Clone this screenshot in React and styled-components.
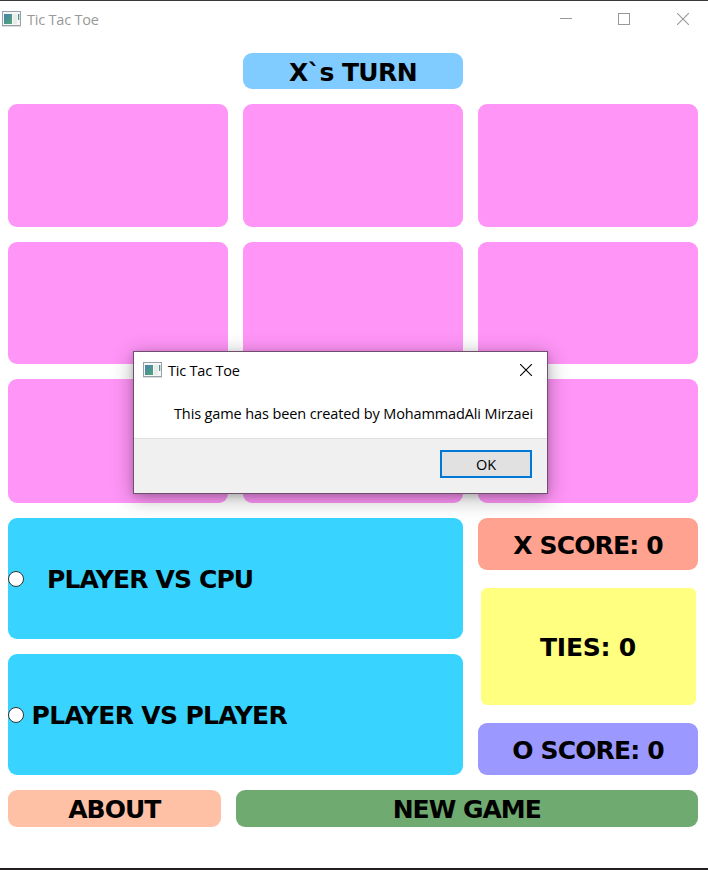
import React from 'react';
import styled, { createGlobalStyle } from 'styled-components';

const GlobalStyle = createGlobalStyle`
  *, *::before, *::after { box-sizing: border-box; }
  body { margin: 0; background: #fff; overflow: hidden; }
`;

const uiFont = '"Open Sans", "Noto Sans", sans-serif';
const gameFont = '"DejaVu Sans", sans-serif';

const Window = styled.div`
  position: relative;
  display: flex;
  flex-direction: column;
  width: 708px;
  height: 870px;
  background: #fff;
  border-top: 1px solid #3a3839;
  border-bottom: 2px solid #231f20;
  font-family: ${uiFont};
`;

const TitleBar = styled.header`
  display: flex;
  align-items: center;
  height: 36px;
  padding-left: 2px;
  padding-right: 19px;
`;

const AppIcon = styled.svg`
  display: block;
  flex: none;
  margin-right: 6px;
`;

const Title = styled.span`
  flex: 1;
  padding-top: 2px;
  font-size: 14.5px;
  letter-spacing: -0.2px;
  line-height: 20px;
  color: ${p => (p.$active ? '#000' : '#999')};
`;

const WindowControls = styled.div`
  display: flex;
  align-items: center;
  gap: 46px;

  svg { display: block; }
  svg:last-child { margin-left: 1px; }
`;

const Game = styled.main`
  display: flex;
  flex-direction: column;
  gap: 15px;
  padding: 16px 10px 0 8px;
`;

const Tile = styled.div`
  display: flex;
  align-items: center;
  justify-content: center;
  height: ${p => p.$height}px;
  border-radius: ${p => p.$radius || 9}px;
  background: ${p => p.$color};
`;

const TurnRow = styled.div`
  display: grid;
  grid-template-columns: 220px;
  justify-content: center;
`;

const Label = styled.span`
  font: bold 25px/34px ${gameFont};
  letter-spacing: ${p => p.$spacing}px;
  white-space: pre;
  color: #000;
  padding-top: ${p => p.$drop ?? 3}px;
`;

const Board = styled.div`
  display: grid;
  grid-template-columns: repeat(3, 220px);
  gap: 15px;
`;

const Cell = styled.button`
  height: ${p => p.$height}px;
  border: 0;
  border-radius: 9px;
  background: #ff95f7;
`;

const Panels = styled.section`
  display: grid;
  grid-template-columns: 455px 220px;
  column-gap: 15px;
`;

const Modes = styled.div`
  display: flex;
  flex-direction: column;
  gap: 15px;
`;

const ModeOption = styled.label`
  display: flex;
  align-items: center;
  gap: ${p => p.$gap}px;
  height: 121.3px;
  padding-top: 1px;
  border-radius: 9px;
  background: #38d4ff;
`;

const Radio = styled.span`
  flex: none;
  width: 16px;
  height: 16px;
  border: 1px solid #333;
  border-radius: 50%;
  background: #fff;
`;

const Scores = styled.div`
  display: flex;
  flex-direction: column;
  justify-content: space-between;
`;

const TiesWrap = styled.div`
  padding: 0 2.5px;
`;

const Actions = styled.footer`
  display: grid;
  grid-template-columns: 212.5px 462.5px;
  gap: 15px;
`;

const Dialog = styled.section`
  position: absolute;
  left: 133px;
  top: 350px;
  width: 415px;
  height: 143px;
  display: flex;
  flex-direction: column;
  background: #fff;
  border: 1px solid #6f4e6e;
  box-shadow: 0 4px 20px rgba(0, 0, 0, 0.32), 0 2px 6px rgba(0, 0, 0, 0.14);
`;

const DialogBar = styled.div`
  display: flex;
  align-items: center;
  height: 36px;
  padding: 0 15px 0 9px;
`;

const Message = styled.p`
  flex: 1;
  margin: 0;
  padding: 16px 0 0 40px;
  font-size: 14.5px;
  line-height: 20px;
  letter-spacing: -0.12px;
  white-space: nowrap;
  color: #000;
`;

const DialogFooter = styled.div`
  display: flex;
  justify-content: flex-end;
  height: 55px;
  padding: 11px 15px 0 0;
  border-top: 1px solid #dfdfdf;
  background: #f0f0f0;
`;

const OkButton = styled.button`
  width: 92px;
  height: 28px;
  padding: 2px 0 0;
  border: 2px solid #0078d7;
  background: #e1e1e1;
  font: 14.5px/22px ${uiFont};
  letter-spacing: -0.2px;
  color: #000;
`;

function WindowIcon() {
  return (
    <AppIcon width="19" height="16" viewBox="0 0 19 16">
      <defs>
        <linearGradient id="pane" x1="0" y1="0" x2="1" y2="1">
          <stop offset="0" stopColor="#4a7fae" />
          <stop offset="1" stopColor="#50a873" />
        </linearGradient>
      </defs>
      <rect y="15" width="19" height="1" fill="#dcdcdc" />
      <rect x="0.5" y="0.5" width="18" height="14" fill="#f7f7f7" stroke="#98a0a8" />
      <rect x="2" y="3" width="8" height="10" fill="url(#pane)" />
      <rect x="11" y="3" width="4" height="10" fill="#e9ebea" />
      <rect x="16" y="3" width="1.3" height="6" fill="url(#pane)" />
    </AppIcon>
  );
}

function CloseIcon({ color }) {
  return (
    <svg width="12" height="12" viewBox="0 0 12 12" stroke={color} strokeWidth="1.1">
      <path d="M0 0L12 12M12 0L0 12" />
    </svg>
  );
}

const rowHeights = [122.5, 122.5, 123.5];

export default function App() {
  return (
    <Window>
      <GlobalStyle />
      <TitleBar>
        <WindowIcon />
        <Title>Tic Tac Toe</Title>
        <WindowControls>
          <svg width="12" height="12" viewBox="0 0 12 12" stroke="#999">
            <path d="M0 5.5H12" />
          </svg>
          <svg width="12" height="12" viewBox="0 0 12 12" fill="none" stroke="#999">
            <rect x="0.5" y="0.5" width="11" height="11" />
          </svg>
          <CloseIcon color="#999" />
        </WindowControls>
      </TitleBar>

      <Game>
        <TurnRow>
          <Tile $height={36.3} $color="#80cbff"><Label $spacing={-0.6}>X`s TURN</Label></Tile>
        </TurnRow>
        <Board>
          {rowHeights.map((height, row) =>
            [0, 1, 2].map(col => <Cell key={`${row}-${col}`} $height={height} />)
          )}
        </Board>
        <Panels>
          <Modes>
            <ModeOption $gap={23}><Radio /><Label $spacing={-0.85}>PLAYER VS CPU</Label></ModeOption>
            <ModeOption $gap={7.5}><Radio /><Label $spacing={-0.65} $drop={2}>PLAYER VS PLAYER</Label></ModeOption>
          </Modes>
          <Scores>
            <Tile $height={52.5} $color="#ffa290"><Label $spacing={-0.85} $drop={4}>X SCORE: 0</Label></Tile>
            <TiesWrap>
              <Tile $height={117.5} $radius={6} $color="#ffff80"><Label $spacing={-0.2}>TIES: 0</Label></Tile>
            </TiesWrap>
            <Tile $height={52.5} $color="#9b98ff"><Label $spacing={-0.85} $drop={4}>O SCORE: 0</Label></Tile>
          </Scores>
        </Panels>
        <Actions>
          <Tile $height={36.3} $color="#ffc1a6"><Label $spacing={-1} $drop={2}>ABOUT</Label></Tile>
          <Tile $height={36.3} $color="#6fab70"><Label $spacing={-1} $drop={2}>NEW GAME</Label></Tile>
        </Actions>
      </Game>

      <Dialog role="dialog">
        <DialogBar>
          <WindowIcon />
          <Title $active>Tic Tac Toe</Title>
          <CloseIcon color="#000" />
        </DialogBar>
        <Message>This game has been created by MohammadAli Mirzaei</Message>
        <DialogFooter>
          <OkButton>OK</OkButton>
        </DialogFooter>
      </Dialog>
    </Window>
  );
}
